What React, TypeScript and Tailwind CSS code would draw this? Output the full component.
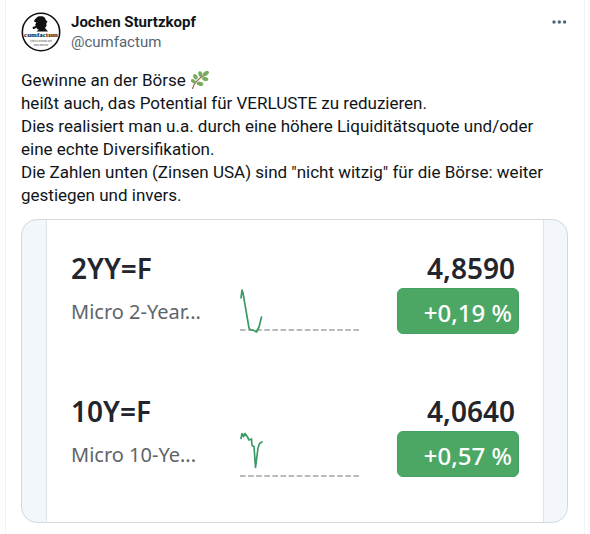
interface Quote {
  symbol: string;
  name: string;
  price: string;
  change: string;
  path: string;
  baseline: number;
}

const lines = [
  "heißt auch, das Potential für VERLUSTE zu reduzieren.",
  "Dies realisiert man u.a. durch eine höhere Liquiditätsquote und/oder eine echte Diversifikation.",
  'Die Zahlen unten (Zinsen USA) sind "nicht witzig" für die Börse: weiter gestiegen und invers.',
];

const quotes: Quote[] = [
  {
    symbol: "2YY=F",
    name: "Micro 2-Year...",
    price: "4,8590",
    change: "+0,19 %",
    path: "M1 48L1.5 44L2 40L3 43L9 78L10 79.5L14 80.5L16.5 82L19 77L21.5 67",
    baseline: 80,
  },
  {
    symbol: "10Y=F",
    name: "Micro 10-Ye...",
    price: "4,0640",
    change: "+0,57 %",
    path: "M1 45.5L2 40.5L3.5 43.5L5 40.5L7.5 44L9 47L11.5 46L12 52.5L14 53.5L15.5 74.5L18 55L19.5 50.5L22 49",
    baseline: 83,
  },
];

function Avatar() {
  return (
    <svg viewBox="0 0 40 40" className="size-10 shrink-0" role="img" aria-label="cumfactum">
      <circle cx="20" cy="20" r="18.7" fill="#fff" stroke="#111" strokeWidth="1.6" />
      {/* Bust with hat and pipe */}
      <path
        d="M15 6.5C16 4.5 18 4 20.5 4.3C23 4.3 24.3 5.5 24.7 8L26.5 9.5L25.3 11.5L25.5 14L24 16L25.5 17.7L27 19.5H15.5L18 17.6L16.3 17.2L15.2 15.4L13.5 17H12L11.6 15L14.8 14L14.2 12.7L15.3 10.5L13 9.4L13.7 7.6Z"
        fill="#111"
      />
      <g fontFamily="'Liberation Serif', serif" textAnchor="middle">
        <text x="20" y="24.8" fontSize="7" fontWeight="bold" fill="#111">cumfactum</text>
        <text x="20" y="29.8" fontSize="5" fill="#555">investment</text>
        <text x="20" y="34.2" fontSize="5" fill="#555">memos</text>
      </g>
    </svg>
  );
}

function Herb() {
  return (
    <svg viewBox="0 0 20 20" className="inline-block size-5 align-[-4px]" role="img" aria-label="Zweig">
      <path d="M2.5 18.5C4 13 9 8 16 4.5" fill="none" stroke="#9a6248" strokeWidth="1.2" strokeLinecap="round" />
      <g fill="#74ad5e">
        <ellipse cx="15.9" cy="3.5" rx="3.3" ry="2" transform="rotate(-35 15.9 3.5)" />
        <ellipse cx="10.4" cy="4.2" rx="2" ry="3.1" transform="rotate(-18 10.4 4.2)" />
        <ellipse cx="5.4" cy="6.8" rx="2" ry="2.9" transform="rotate(-28 5.4 6.8)" />
        <ellipse cx="3.4" cy="11.2" rx="2.8" ry="1.8" transform="rotate(32 3.4 11.2)" />
        <ellipse cx="15.2" cy="9" rx="3.1" ry="2" transform="rotate(12 15.2 9)" />
        <ellipse cx="10" cy="13.8" rx="3.3" ry="2.1" transform="rotate(12 10 13.8)" />
      </g>
    </svg>
  );
}

function QuoteRow({ quote }: { quote: Quote }) {
  return (
    <div className="flex items-start">
      <div className="flex-1 min-w-0">
        <h2 className="text-[28px] leading-9 font-semibold text-[#22262c]">{quote.symbol}</h2>
        <p className="mt-3 text-[20px] leading-7 text-[#5f6469] whitespace-nowrap">{quote.name}</p>
      </div>
      <svg viewBox="0 0 119 85" className="w-[119px] h-[85px] shrink-0" aria-hidden="true">
        <path d={`M0 ${quote.baseline}H119`} stroke="#a3a5a7" strokeWidth="1.5" strokeDasharray="5.6 2.5" />
        <path d={quote.path} fill="none" stroke="#3a9b62" strokeWidth="1.7" strokeLinejoin="round" strokeLinecap="round" />
      </svg>
      <div className="ml-[38px] w-[122px] text-right whitespace-nowrap">
        <p className="pr-1 text-[28px] leading-9 font-semibold text-[#22262c]">{quote.price}</p>
        <p className="mt-0.5 rounded-md border border-[#45a163] bg-[#4ca765] pt-1 pr-1.5 text-[24px] leading-10 font-medium text-white">
          {quote.change}
        </p>
      </div>
    </div>
  );
}

export default function App() {
  return (
    <div className="min-h-screen bg-white px-[5px]">
      <article className="min-h-screen border-x border-[#eff3f4] pt-3 pr-4 pl-[15px] font-['Roboto',sans-serif] text-[#0f1419]">
        <header className="flex items-start">
          <Avatar />
          <div className="ml-2.5 text-[15px] leading-5">
            <a href="#profile" className="block font-bold">Jochen Sturtzkopf</a>
            <a href="#profile" className="block text-[#536471]">@cumfactum</a>
          </div>
          <button type="button" aria-label="Mehr" className="ml-auto size-5 text-[#536471]">
            <svg viewBox="0 0 20 20" className="size-5" fill="currentColor">
              <circle cx="6" cy="10" r="1.7" />
              <circle cx="11.3" cy="10" r="1.7" />
              <circle cx="16.6" cy="10" r="1.7" />
            </svg>
          </button>
        </header>

        <div className="mt-[17px] pr-4 text-[17px] leading-[23px]">
          <p>
            Gewinne an der Börse <Herb />
          </p>
          {lines.map((line) => (
            <p key={line}>{line}</p>
          ))}
        </div>

        {/* Attached quote card */}
        <div className="mt-3 flex overflow-hidden rounded-2xl border border-[#cfd9de] bg-[#f3f7fb] pr-[23px] pl-6 font-['Noto_Sans',sans-serif]">
          <div className="flex flex-1 flex-col gap-[58px] border-x border-[#dde4e9] bg-white pt-[30px] pr-6 pb-11 pl-6">
            {quotes.map((quote) => (
              <QuoteRow key={quote.symbol} quote={quote} />
            ))}
          </div>
        </div>
      </article>
    </div>
  );
}
